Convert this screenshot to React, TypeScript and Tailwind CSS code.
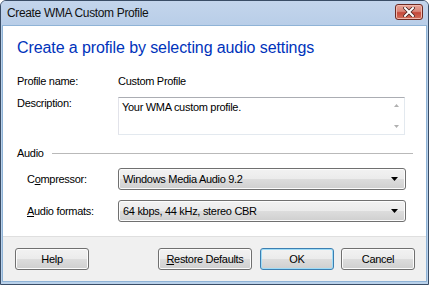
import React from "react";

const font = { fontFamily: '"Liberation Sans", Arial, sans-serif' };

function Btn({ children, def }: { children: React.ReactNode; def?: boolean }) {
  return (
    <div
      className={
        "h-[22px] w-[74px] rounded-[3px] border flex items-center justify-center text-[11px] tracking-[-0.3px] text-black " +
        (def
          ? "border-[#3c7fb1] shadow-[inset_0_0_0_1px_#9fdcf7] bg-[linear-gradient(#f2f2f2_0%,#ebebeb_50%,#dddddd_50%,#cfcfcf_100%)]"
          : "border-[#707070] shadow-[inset_0_0_0_1px_#fcfcfc] bg-[linear-gradient(#f2f2f2_0%,#ebebeb_50%,#dddddd_50%,#cfcfcf_100%)]")
      }
    >
      {children}
    </div>
  );
}

function Select({ text }: { text: string }) {
  return (
    <div className="h-[22px] w-[288px] rounded-[3px] border border-[#707070] shadow-[inset_0_0_0_1px_#fcfcfc] bg-[linear-gradient(#f2f2f2_0%,#ebebeb_50%,#dddddd_50%,#cfcfcf_100%)] flex items-center pl-[4px] pr-[7px] text-[11px] tracking-[-0.3px] text-black">
      <span className="flex-1">{text}</span>
      <svg width="7" height="4" viewBox="0 0 7 4">
        <path d="M0 0H7L3.5 4Z" fill="#000" />
      </svg>
    </div>
  );
}

export default function App() {
  return (
    <div
      style={font}
      className="w-[429px] h-[285px] bg-[#b9d1ea] border border-[#3a4d66] rounded-t-[6px] flex flex-col overflow-hidden"
    >
      {/* Title bar */}
      <div className="h-[24px] flex items-center bg-[linear-gradient(#c3d5ec,#b9cee8)] pl-[6px] pr-[5px] shrink-0">
        <span className="flex-1 text-[12px] tracking-[-0.35px] text-[#111]">Create WMA Custom Profile</span>
        <div className="w-[28px] h-[16px] mt-[-3px] rounded-[3px] border border-[#6e2a22] bg-[linear-gradient(#e8a497_0%,#d98679_45%,#c5483a_55%,#d2705c_100%)] flex items-center justify-center shadow-[inset_0_0_0_1px_#f0b8ad]">
          <svg width="12" height="10" viewBox="0 0 12 10">
            <path d="M2 1L10 9M10 1L2 9" stroke="#4a2320" strokeWidth="3.6" strokeLinecap="square" />
            <path d="M2 1L10 9M10 1L2 9" stroke="#fff" strokeWidth="2" strokeLinecap="square" />
          </svg>
        </div>
      </div>

      {/* Client */}
      <div className="flex-1 flex flex-col mx-[1px] mb-[2px] border border-[#8fb3d6] bg-white">
        <div className="flex-1 flex flex-col pl-[14px] text-[11px] tracking-[-0.3px] text-black">
          <div className="mt-[12px] h-[20px] leading-[20px] text-[16px] tracking-[-0.1px] text-[#0033bb]">
            Create a profile by selecting audio settings
          </div>

          <div className="mt-[15px] h-[16px] flex items-center">
            <span className="w-[101px]">Profile name:</span>
            <span>Custom Profile</span>
          </div>

          <div className="mt-[6px] flex items-start">
            <span className="w-[101px] leading-[16px]">Description:</span>
            <div className="mt-[2px] w-[287px] h-[38px] border border-[#abadb3] border-r-[#e3e9ef] border-b-[#e3e9ef] border-l-[#e2e3ea] flex">
              <span className="flex-1 pl-[3px] pt-[1px] leading-[16px]">Your WMA custom profile.</span>
              <div className="w-[15px] flex flex-col items-center justify-between py-[6px]">
                <svg width="5" height="3" viewBox="0 0 5 3">
                  <path d="M0 3H5L2.5 0Z" fill="#b0b0b0" />
                </svg>
                <svg width="5" height="3" viewBox="0 0 5 3">
                  <path d="M0 0H5L2.5 3Z" fill="#b0b0b0" />
                </svg>
              </div>
            </div>
          </div>

          <div className="mt-[10px] h-[16px] flex items-center pr-[13px]">
            <span>Audio</span>
            <div className="flex-1 ml-[8px] h-[1px] bg-[#b9b9b9]" />
          </div>

          <div className="mt-[7px] flex items-center">
            <span className="w-[101px] pl-[10px]">
              C<span className="underline">o</span>mpressor:
            </span>
            <Select text="Windows Media Audio 9.2" />
          </div>

          <div className="mt-[10px] flex items-center">
            <span className="w-[101px] pl-[10px]">
              <span className="underline">A</span>udio formats:
            </span>
            <Select text="64 kbps, 44 kHz, stereo CBR" />
          </div>
        </div>

        {/* Footer */}
        <div className="h-[45px] shrink-0 bg-[#f0f0f0] border-t border-[#dfdfdf] flex items-start pt-[11px] pl-[12px] pr-[11px]">
          <Btn>Help</Btn>
          <div className="flex-1" />
          <div className="w-[94px]">
            <div className="h-[22px] w-[94px] rounded-[3px] border border-[#707070] shadow-[inset_0_0_0_1px_#fcfcfc] bg-[linear-gradient(#f2f2f2_0%,#ebebeb_50%,#dddddd_50%,#cfcfcf_100%)] flex items-center justify-center text-[11px] tracking-[-0.3px] text-black">
              <span>
                <span className="underline">R</span>estore Defaults
              </span>
            </div>
          </div>
          <div className="w-[8px]" />
          <Btn def>OK</Btn>
          <div className="w-[7px]" />
          <Btn>Cancel</Btn>
        </div>
      </div>
    </div>
  );
}
